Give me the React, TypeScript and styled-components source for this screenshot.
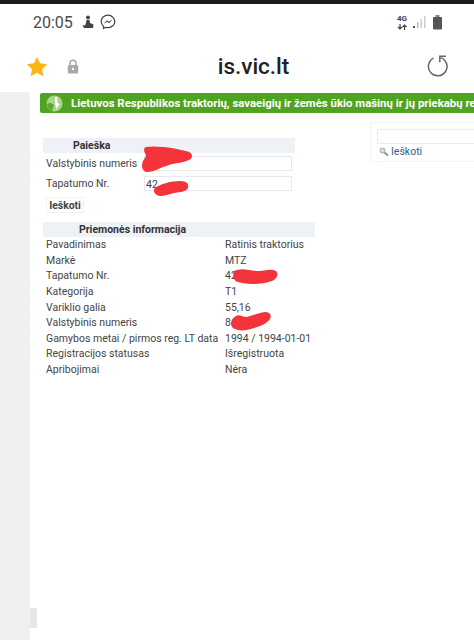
import React from "react";
import styled, { createGlobalStyle } from "styled-components";

const GlobalStyle = createGlobalStyle`
  html, body {
    margin: 0;
    padding: 0;
    background: #fff;
    overflow: hidden;
  }
  body {
    font-family: Roboto, "Liberation Sans", sans-serif;
  }
`;

const Phone = styled.div`
  width: 474px;
  height: 640px;
  overflow: hidden;
  display: flex;
  flex-direction: column;
  border-top: 4px solid #1c1c1c;
  box-sizing: border-box;
`;

const StatusBar = styled.div`
  height: 36px;
  flex: none;
  display: flex;
  align-items: center;
  padding: 0 31px 0 33px;
  color: #4a4a4a;
`;

const Clock = styled.span`
  font-size: 16px;
  margin-right: 8px;
`;

const StatusIcons = styled.div`
  display: flex;
  align-items: center;
  gap: 5px;
`;

const StatusRight = styled.div`
  margin-left: auto;
  display: flex;
  align-items: center;
  gap: 6px;
`;

const NetBlock = styled.div`
  display: flex;
  flex-direction: column;
  align-items: center;
  gap: 1px;
`;

const NetLabel = styled.span`
  font-size: 8px;
  font-weight: 700;
  line-height: 8px;
  color: #444;
`;

const AddressBar = styled.div`
  height: 52px;
  flex: none;
  display: flex;
  align-items: center;
  padding: 0 26px 0 26px;
`;

const Url = styled.div`
  flex: 1;
  text-align: center;
  font-size: 22.5px;
  font-weight: 500;
  color: #222;
  padding-left: 2px;
`;

const LeftIcons = styled.div`
  display: flex;
  align-items: center;
  gap: 19px;
`;

const PageArea = styled.div`
  flex: 1;
  display: flex;
  min-height: 0;
`;

const Gutter = styled.div`
  width: 30px;
  flex: none;
  background: #f0f0f0;
  position: relative;
`;

const GutterHandle = styled.div`
  position: absolute;
  right: -7px;
  top: 516px;
  width: 7px;
  height: 20px;
  background: #e6e6e6;
`;

const Content = styled.div`
  flex: 1;
  min-width: 0;
  padding: 1px 0 0 10px;
  overflow: hidden;
`;

const Banner = styled.div`
  height: 20px;
  background: #4fa31f;
  border-radius: 2px 0 0 2px;
  display: flex;
  align-items: center;
  padding-left: 6px;
  gap: 8px;
  color: #fff;
  font-size: 11.4px;
  font-weight: 700;
  white-space: nowrap;
  overflow: hidden;

  svg {
    flex: none;
  }
`;

const Columns = styled.div`
  display: flex;
  align-items: flex-start;
`;

const MainColumn = styled.div`
  width: 277px;
  flex: none;
  margin-left: 3px;
  padding-top: 25px;
`;

const SectionHead = styled.div<{ $width: number; $indent: number }>`
  width: ${(p) => p.$width}px;
  height: 15px;
  line-height: 15px;
  padding-left: ${(p) => p.$indent}px;
  box-sizing: border-box;
  background: #eef1f6;
  font-size: 10.5px;
  font-weight: 700;
  color: #333;
`;

const FormRow = styled.div`
  height: 20px;
  display: flex;
  align-items: center;
  padding-left: 3px;
  font-size: 10.5px;
  color: #444;
`;

const FormLabel = styled.span`
  width: 98px;
  flex: none;
`;

const TextField = styled.div`
  width: 148px;
  height: 15px;
  line-height: 15px;
  box-sizing: border-box;
  border: 1px solid #e8e8ee;
  padding-left: 1px;
  font-size: 10.5px;
  color: #444;
`;

const SearchButton = styled.div`
  width: 38px;
  height: 16px;
  line-height: 16px;
  margin: 4px 0 9px 3px;
  text-align: center;
  border: 1px solid #f4f2ee;
  box-sizing: border-box;
  font-size: 10.4px;
  font-weight: 700;
  color: #444;
`;

const InfoGrid = styled.div`
  display: grid;
  grid-template-columns: 179px 1fr;
  grid-auto-rows: 15.6px;
  align-items: center;
  padding: 0 0 0 3px;
  font-size: 10.5px;
  color: #444;
  white-space: nowrap;
`;

const SideBox = styled.div`
  margin: 9px 0 0 50px;
  flex: 1;
  height: 40px;
  box-sizing: border-box;
  border: 1px solid #f8f2f6;
  border-right: none;
  padding: 6px 0 0 6px;
`;

const SideInput = styled.div`
  height: 15px;
  box-sizing: border-box;
  border: 1px solid #ececf2;
  border-right: none;
`;

const SideLink = styled.div`
  display: flex;
  align-items: center;
  gap: 2px;
  padding: 1px 0 0 2px;
  font-size: 10.5px;
  color: #36617f;
`;

const Scribble = styled.svg`
  position: absolute;
  left: 0;
  top: 0;
  pointer-events: none;
`;

const Root = styled.div`
  position: relative;
  width: 474px;
  height: 640px;
`;

const infoRows = [
  ["Pavadinimas", "Ratinis traktorius"],
  ["Markė", "MTZ"],
  ["Tapatumo Nr.", "42"],
  ["Kategorija", "T1"],
  ["Variklio galia", "55,16"],
  ["Valstybinis numeris", "8"],
  ["Gamybos metai / pirmos reg. LT data", "1994 / 1994-01-01"],
  ["Registracijos statusas", "Išregistruota"],
  ["Apribojimai", "Nėra"],
];

const App: React.FC = () => {
  return (
    <Root>
      <GlobalStyle />
      <Phone>
        <StatusBar>
          <Clock>20:05</Clock>
          <StatusIcons>
            <svg width="14" height="14" viewBox="0 0 14 14">
              <circle cx="7" cy="2.500" r="2" fill="#444" />
              <path d="M5.500 5h3l.5 3 3.500 1.500-.5 3.500H3L1.500 10 4 10.500 5 8z" fill="#444" />
            </svg>
            <svg width="16" height="16" viewBox="0 0 16 16" fill="none">
              <path
                d="M8 1.200C4.200 1.200 1.200 4 1.200 7.600c0 2 .9 3.600 2.300 4.700v2.200l2.100-1.200c.8.200 1.600.3 2.400.3 3.800 0 6.800-2.800 6.800-6S11.800 1.200 8 1.200z"
                stroke="#444"
                strokeWidth="1.200"
              />
              <path d="M4.500 9.200 7 6.600l1.800 1.500 2.700-1.800-2.500 2.700-1.800-1.500z" fill="#444" stroke="#444" strokeWidth=".5" />
            </svg>
          </StatusIcons>
          <StatusRight>
            <NetBlock>
              <NetLabel>4G</NetLabel>
              <svg width="10" height="6" viewBox="0 0 10 6" fill="none" stroke="#444" strokeWidth="1.200">
                <path d="M3 0v5M1 3l2 2 2-2" />
                <path d="M7.500 6V1M5.500 3l2-2 2 2" />
              </svg>
            </NetBlock>
            <svg width="13" height="14" viewBox="0 0 13 14">
              <rect x="0" y="11" width="2" height="2" fill="#555" />
              <rect x="4" y="7" width="1.500" height="6" fill="#bbb" />
              <rect x="7.500" y="4" width="1.500" height="9" fill="#ccc" />
              <rect x="11" y="1" width="1.500" height="12" fill="#ccc" />
            </svg>
            <svg width="11" height="15" viewBox="0 0 11 15">
              <rect x="3.500" y="0" width="4" height="2" fill="#888" />
              <rect x="1" y="2" width="9" height="12.500" rx="1" fill="#555" />
            </svg>
          </StatusRight>
        </StatusBar>
        <AddressBar>
          <LeftIcons>
            <svg width="22" height="21" viewBox="0 0 24 23">
              <path
                d="M12 .8l3.400 7.200 7.800 1-5.700 5.400 1.500 7.800-7-3.900-7 3.900 1.500-7.800L.8 9l7.800-1z"
                fill="#fdb515"
              />
            </svg>
            <svg width="12" height="15" viewBox="0 0 12 15" fill="none">
              <path d="M3 6.500V4.200a3 3 0 0 1 6 0v2.300" stroke="#a8a8a8" strokeWidth="1.500" />
              <rect x=".8" y="6" width="10.400" height="8.500" rx="1.500" fill="#a8a8a8" />
              <circle cx="6" cy="10" r="1.200" fill="#fff" />
            </svg>
          </LeftIcons>
          <Url>is.vic.lt</Url>
          <svg width="22" height="22" viewBox="0 0 22 22" fill="none">
            <path d="M7.500 3.200A9.300 9.300 0 1 0 14.500 2.600" stroke="#666" strokeWidth="1.500" />
            <path d="M20 1.200h-6.200v6" stroke="#666" strokeWidth="1.500" />
          </svg>
        </AddressBar>
        <PageArea>
          <Gutter>
            <GutterHandle />
          </Gutter>
          <Content>
            <Banner>
              <svg width="17" height="17" viewBox="0 0 17 17">
                <circle cx="8.500" cy="8.500" r="8" fill="#a8d68c" />
                <path d="M1 9c3-2 5-1 7 1l-2 6C3 15 1 12 1 9z" fill="#5aa832" />
                <path d="M9 2h2l.5 6 2 1-3 5-1.500-5z" fill="#fff" />
              </svg>
              Lietuvos Respublikos traktorių, savaeigių ir žemės ūkio mašinų ir jų priekabų registras
            </Banner>
            <Columns>
              <MainColumn>
                <SectionHead $width={252} $indent={30}>
                  Paieška
                </SectionHead>
                <FormRow>
                  <FormLabel>Valstybinis numeris</FormLabel>
                  <TextField />
                </FormRow>
                <FormRow>
                  <FormLabel>Tapatumo Nr.</FormLabel>
                  <TextField>42</TextField>
                </FormRow>
                <SearchButton>Ieškoti</SearchButton>
                <SectionHead $width={272} $indent={36}>
                  Priemonės informacija
                </SectionHead>
                <InfoGrid>
                  {infoRows.map(([label, value]) => (
                    <React.Fragment key={label}>
                      <span>{label}</span>
                      <span>{value}</span>
                    </React.Fragment>
                  ))}
                </InfoGrid>
              </MainColumn>
              <SideBox>
                <SideInput />
                <SideLink>
                  <svg width="10" height="10" viewBox="0 0 10 10" fill="none">
                    <circle cx="3.500" cy="3.500" r="2.500" fill="#d4dde6" stroke="#9aa8b5" />
                    <path d="M5.500 5.500 9 8.500" stroke="#8a8a8a" strokeWidth="1.800" />
                  </svg>
                  Ieškoti
                </SideLink>
              </SideBox>
            </Columns>
          </Content>
        </PageArea>
      </Phone>
      {/* red marker scribbles hiding the plate numbers */}
      <Scribble width="474" height="640" viewBox="0 0 474 640">
        <g fill="#f5333b">
          <path d="M146 147c12-2 34 2 43 5 4 2 4 6 0 8-6 3-14 3-20 5-8 2-14 7-22 7-5 0-6-7-4-11 1-2 3-4 3-6-2-3-3-7 0-8z" />
          <path d="M156 187c6-3 14-6 24-6 7 0 9 3 8 7-2 4-8 4-14 5-5 1-9 3-14 3-6-1-8-6-4-9z" />
          <path d="M237 270c8-2 12 1 20 1 7 0 14-3 19 0 3 3 1 8-4 10-9 3-20 4-30 2-5-1-7-2-8-4l-1-5c0-2 2-4 4-4z" />
          <path d="M236 316c3-2 6 1 10 1 6-1 12-4 19-5 5 0 7 3 5 7-3 5-12 8-19 10-6 2-14 2-18-1-3-3-3-9 3-12z" />
        </g>
      </Scribble>
    </Root>
  );
};

export default App;
